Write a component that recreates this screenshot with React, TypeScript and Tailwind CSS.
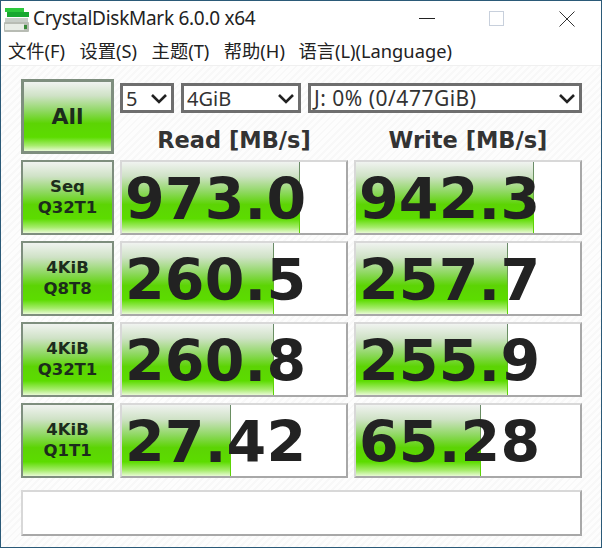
import React from "react"

const sans = "font-['Noto_Sans','Noto_Sans_CJK_SC',sans-serif]"
const bold = "font-['DejaVu_Sans',sans-serif] font-bold"
const green = "bg-[linear-gradient(to_bottom,#f0f3f0_0%,#cfe2c6_20%,#8fd862_42%,#5cd404_60%,#5cdc00_80%,#a6ec6c_92%,#e8fad4_100%)]"

const rows = [
  { label: ["Seq", "Q32T1"], read: "973.0", readBar: 178, write: "942.3", writeBar: 178 },
  { label: ["4KiB", "Q8T8"], read: "260.5", readBar: 152, write: "257.7", writeBar: 152 },
  { label: ["4KiB", "Q32T1"], read: "260.8", readBar: 152, write: "255.9", writeBar: 152 },
  { label: ["4KiB", "Q1T1"], read: "27.42", readBar: 109, write: "65.28", writeBar: 125 },
]

function Chevron() {
  return (
    <svg width="18" height="11" viewBox="0 0 18 11" fill="none" className="shrink-0">
      <path d="M2 2l7 7 7-7" stroke="#222" strokeWidth="2.6" />
    </svg>
  )
}

function Select({ value, className, textClass }: { value: string; className: string; textClass: string }) {
  return (
    <div className={`flex h-[30px] items-center justify-between border-[3px] border-[#6e6e6e] bg-white pl-[3px] pr-[3px] text-[#333] ${className}`}>
      <span className={`mt-[1px] whitespace-nowrap leading-none ${textClass}`}>{value}</span>
      <Chevron />
    </div>
  )
}

function Score({ value, bar }: { value: string; bar: number }) {
  return (
    <div className="relative flex h-[75px] items-center overflow-hidden border-2 border-[#d8d8d8] border-b-[#a8a8a8] border-r-[#a8a8a8] bg-white pl-[3px] pt-[3px]">
      <div className={`absolute inset-y-0 left-0 ${green}`} style={{ width: bar }}>
        <div className="absolute inset-y-0 right-0 w-[1px] bg-[linear-gradient(to_bottom,#6a8a6a_0%,#6a9a50_45%,#5cd404_70%,#5cd404_100%)]" />
      </div>
      <span className={`relative text-[57px] leading-none tracking-[0.2px] text-[#222] ${bold}`}>{value}</span>
    </div>
  )
}

export default function App() {
  return (
    <div className={`flex h-[548px] w-[602px] flex-col overflow-hidden border border-[#2b5a78] bg-white ${sans}`}>
      {/* Title bar */}
      <div className="flex h-[35px] shrink-0 items-center pl-[3px]">
        <svg width="25" height="26" viewBox="0 0 25 26" className="shrink-0">
          <rect x="1" y="2" width="19" height="4" fill="#2cc83c" />
          <rect x="3" y="6" width="22" height="5" fill="#18a830" />
          <rect x="1" y="12" width="23" height="5" fill="#c8cec8" />
          <rect x="0" y="16" width="25" height="10" rx="1" fill="#b8bcb4" />
          <rect x="1" y="18" width="19" height="6" fill="#e8ece6" />
          <rect x="20" y="19" width="3" height="4" fill="#3a8a3a" />
        </svg>
        <span className="ml-[4px] text-[19px] leading-none tracking-[-0.28px] text-[#222]">CrystalDiskMark 6.0.0 x64</span>
        <div className="ml-auto flex items-center">
          <div className="h-[1px] w-[16px] bg-[#222]" />
          <div className="ml-[54px] h-[15px] w-[15px] border border-[#c8d0dc]" />
          <svg width="16" height="16" viewBox="0 0 16 16" className="ml-[55px] mr-[26px]">
            <path d="M0.5 0.5l15 15M15.5 0.5l-15 15" stroke="#333" strokeWidth="1" />
          </svg>
        </div>
      </div>

      {/* Menu */}
      <div className="flex h-[30px] shrink-0 items-center gap-[14.5px] border-b border-[#f0f0f0] pl-[7px] text-[18.3px] text-[#222]">
        <span className="mt-[1px]">文件(F)</span>
        <span className="mt-[1px]">设置(S)</span>
        <span className="mt-[1px]">主题(T)</span>
        <span className="mt-[1px]">帮助(H)</span>
        <span className="mt-[1px] -ml-[1px]">语言(L)(Language)</span>
      </div>

      {/* Main panel */}
      <div className="flex flex-1 flex-col bg-[repeating-linear-gradient(135deg,#fdfdfd_0px,#fdfdfd_3px,#f8f8f8_3px,#f8f8f8_5px)] pl-[20px] pr-[19px] pt-[13px]">
        <div className="grid grid-cols-[93px_228px_228px] gap-x-[6px]">
          <div className={`flex h-[75px] items-center justify-center border-[3px] border-[#7e8e7e] text-[22px] text-[#1c2c1c] ${green} ${bold}`}>
            All
          </div>
          <div className="col-span-2 flex flex-col">
            <div className="mt-[4px] flex gap-[7px]">
              <Select value="5" className="w-[54px]" textClass="text-[20px]" />
              <Select value="4GiB" className="w-[120px]" textClass="text-[20px]" />
              <Select value="J: 0% (0/477GiB)" className="flex-1" textClass="text-[21px] tracking-[0.5px]" />
            </div>
            <div className={`mt-[13px] grid grid-cols-2 gap-x-[6px] text-center text-[22.5px] leading-[28px] text-[#333] ${bold}`}>
              <span>Read [MB/s]</span>
              <span>Write [MB/s]</span>
            </div>
          </div>
        </div>

        <div className="mt-[6px] grid grid-cols-[93px_228px_228px] gap-[6px]">
          {rows.map((r) => (
            <React.Fragment key={r.read}>
              <div className={`flex h-[75px] flex-col items-center justify-center border-[2px] border-[#7e8e7e] pb-[2px] text-[16.5px] leading-[21px] text-[#1c2c1c] ${green} ${bold}`}>
                <span>{r.label[0]}</span>
                <span>{r.label[1]}</span>
              </div>
              <Score value={r.read} bar={r.readBar} />
              <Score value={r.write} bar={r.writeBar} />
            </React.Fragment>
          ))}
        </div>

        <div className="mt-[12px] h-[46px] w-[561px] border-[2px] border-[#d8d8d8] border-b-[#a8a8a8] border-r-[#a8a8a8] bg-white" />
      </div>
    </div>
  )
}
